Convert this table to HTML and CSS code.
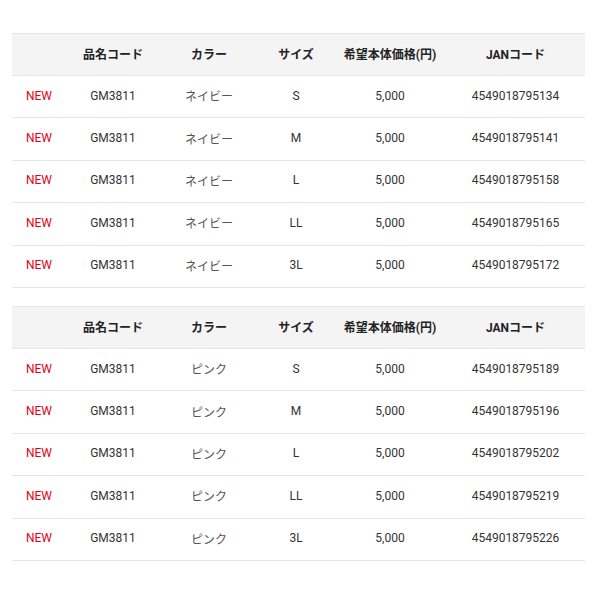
FILE: index.html
```html
<!DOCTYPE html>
<html lang="ja">
<head>
<meta charset="utf-8">
<link rel="stylesheet" href="styles.css">
</head>
<body>
<div class="wrap">
<table class="spec">
<colgroup><col class="c1"><col class="c2"><col class="c3"><col class="c4"><col class="c5"><col class="c6"></colgroup>
<thead><tr><th></th><th>品名コード</th><th>カラー</th><th>サイズ</th><th>希望本体価格(円)</th><th>JANコード</th></tr></thead>
<tbody>
<tr><td class="new">NEW</td><td>GM3811</td><td class="jp">ネイビー</td><td>S</td><td>5,000</td><td>4549018795134</td></tr>
<tr><td class="new">NEW</td><td>GM3811</td><td class="jp">ネイビー</td><td>M</td><td>5,000</td><td>4549018795141</td></tr>
<tr><td class="new">NEW</td><td>GM3811</td><td class="jp">ネイビー</td><td>L</td><td>5,000</td><td>4549018795158</td></tr>
<tr><td class="new">NEW</td><td>GM3811</td><td class="jp">ネイビー</td><td>LL</td><td>5,000</td><td>4549018795165</td></tr>
<tr><td class="new">NEW</td><td>GM3811</td><td class="jp">ネイビー</td><td>3L</td><td>5,000</td><td>4549018795172</td></tr>
</tbody>
</table>
<table class="spec">
<colgroup><col class="c1"><col class="c2"><col class="c3"><col class="c4"><col class="c5"><col class="c6"></colgroup>
<thead><tr><th></th><th>品名コード</th><th>カラー</th><th>サイズ</th><th>希望本体価格(円)</th><th>JANコード</th></tr></thead>
<tbody>
<tr><td class="new">NEW</td><td>GM3811</td><td class="jp">ピンク</td><td>S</td><td>5,000</td><td>4549018795189</td></tr>
<tr><td class="new">NEW</td><td>GM3811</td><td class="jp">ピンク</td><td>M</td><td>5,000</td><td>4549018795196</td></tr>
<tr><td class="new">NEW</td><td>GM3811</td><td class="jp">ピンク</td><td>L</td><td>5,000</td><td>4549018795202</td></tr>
<tr><td class="new">NEW</td><td>GM3811</td><td class="jp">ピンク</td><td>LL</td><td>5,000</td><td>4549018795219</td></tr>
<tr><td class="new">NEW</td><td>GM3811</td><td class="jp">ピンク</td><td>3L</td><td>5,000</td><td>4549018795226</td></tr>
</tbody>
</table>
</div>
</body>
</html>
```
FILE: styles.css
```css
html, body {
  margin: 0;
  padding: 0;
  background: #fff;
}
.wrap {
  padding: 33px 15px 0 12px;
  display: flex;
  flex-direction: column;
  gap: 18px;
}
.spec {
  width: 573px;
  border-collapse: collapse;
  table-layout: fixed;
  font-family: Roboto, "Noto Sans CJK JP", sans-serif;
  font-size: 12px;
  color: #333;
}
.c1 { width: 54px; }
.c2 { width: 94px; }
.c3 { width: 98px; }
.c4 { width: 76px; }
.c5 { width: 112px; }
.c6 { width: 139px; }
.spec th, .spec td {
  text-align: center;
  vertical-align: middle;
  padding: 0 0 2px 0;
  border-top: 1px solid #e6e6e6;
  border-bottom: 1px solid #e6e6e6;
}
.spec th {
  height: 39px;
  background: #f4f4f4;
  font-weight: bold;
  color: #222;
}
.spec td {
  height: 39.4px;
}
.spec .new {
  color: #e60012;
}
.spec .jp {
  color: #555;
  font-family: "Noto Sans CJK JP", sans-serif;
  font-weight: normal;
}
```
